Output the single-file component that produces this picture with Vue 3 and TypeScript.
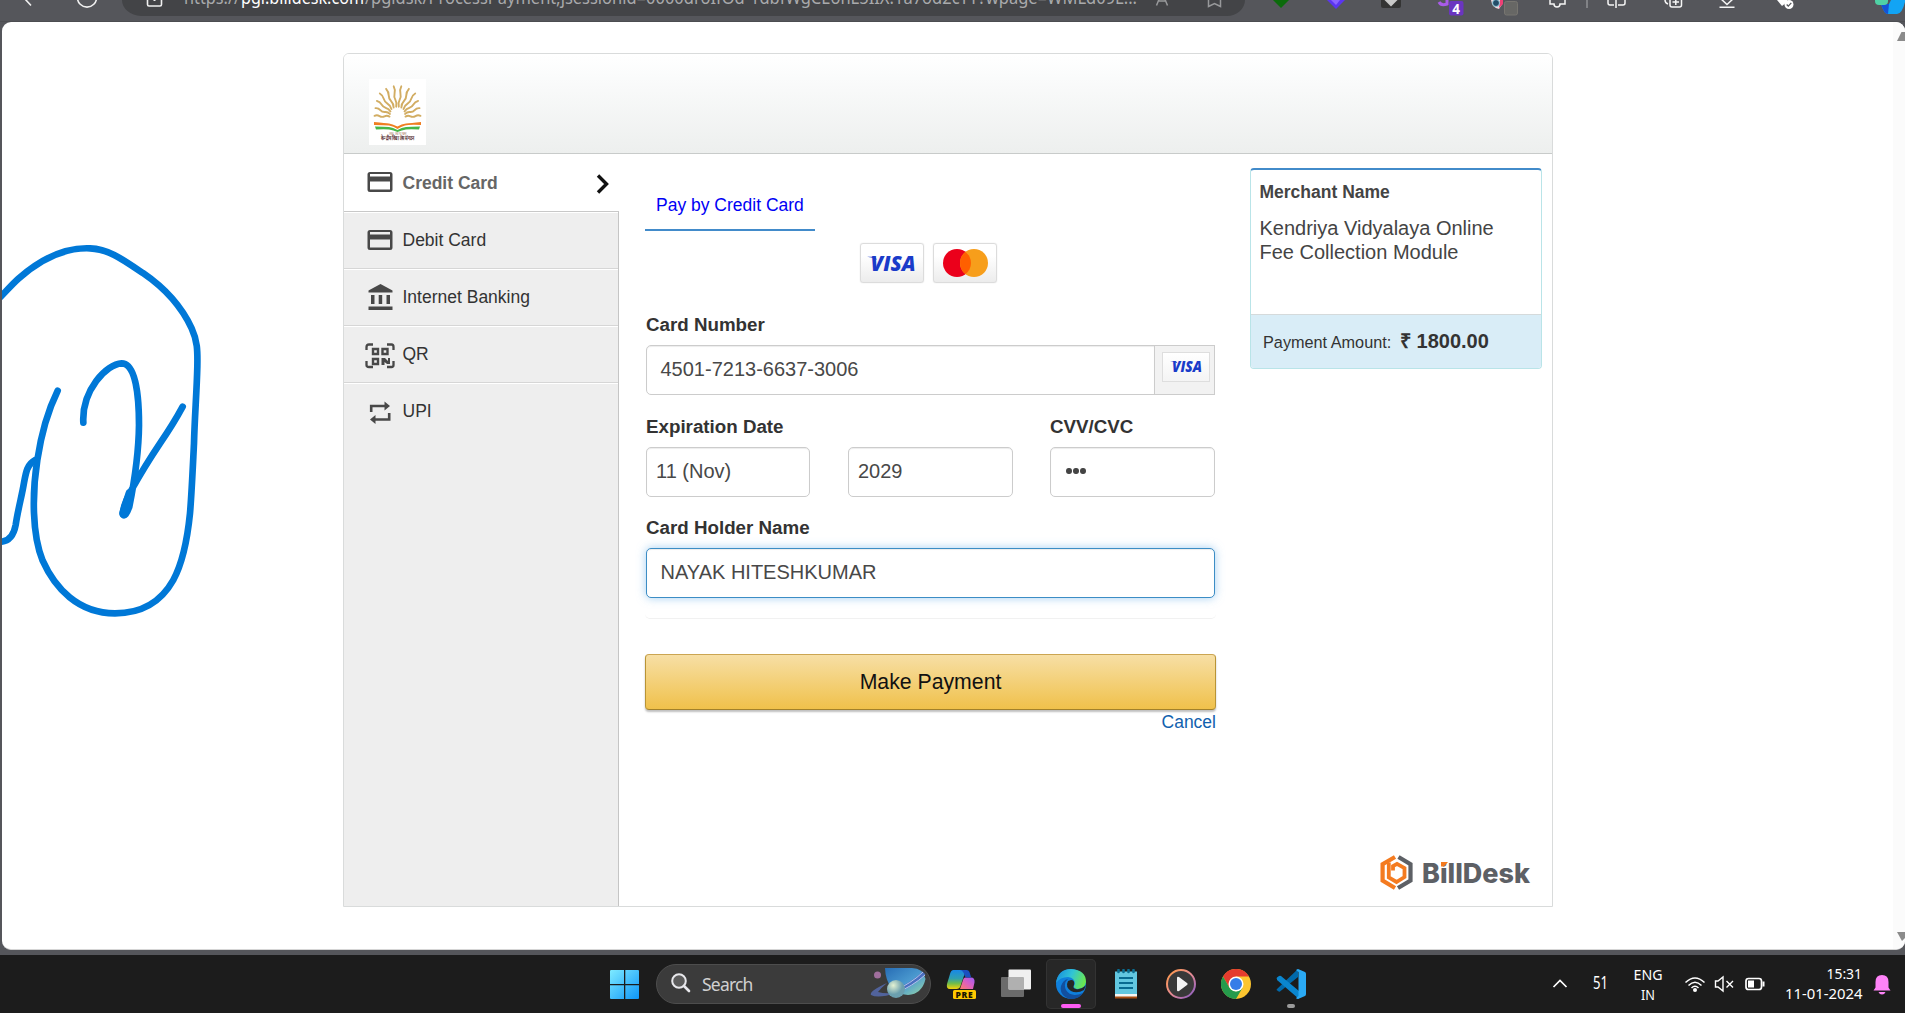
<script setup lang="ts">
import { ref } from 'vue'

interface Method {
  id: string
  label: string
}

interface Ray {
  angle: number
  stretch: number
}

const methods: Method[] = [
  { id: 'credit', label: 'Credit Card' },
  { id: 'debit', label: 'Debit Card' },
  { id: 'bank', label: 'Internet Banking' },
  { id: 'qr', label: 'QR' },
  { id: 'upi', label: 'UPI' },
]
const active = ref('credit')
const cardNumber = ref('4501-7213-6637-3006')
const holder = ref('NAYAK HITESHKUMAR')

// Emblem rays: degrees from vertical on one side, mirrored for the other
const rays: Ray[] = [
  { angle: 7, stretch: 1.33 },
  { angle: 22, stretch: 1.31 },
  { angle: 37, stretch: 1.27 },
  { angle: 52, stretch: 1.13 },
  { angle: 68, stretch: 1.03 },
  { angle: 87, stretch: 1 },
]
</script>

<template>
  <div class="screen">
    <header class="chrome">
      <svg width="1905" height="22" viewBox="0 0 1905 22" font-family="'Noto Sans','Open Sans',sans-serif">
        <path d="M122 -4V0A20 16 0 0 0 141 16H1227A18 16 0 0 0 1245 0V-4Z" fill="#434447" />
        <g fill="none" stroke="#f0f0f0" stroke-width="1.6">
          <path d="M25 -1L31 5.5" />
          <circle cx="87" cy="-2.5" r="9.6" />
          <path d="M147.500 -2V4.500Q147.500 6 149 6H160Q161.500 6 161.500 4.500V-2" />
          <path d="M153.500 0h2" stroke-width="2" />
        </g>
        <g font-size="17.5" fill="#a9aaac">
          <text x="184" y="4" textLength="56" lengthAdjust="spacingAndGlyphs">https://</text>
          <text x="241" y="4" textLength="123" lengthAdjust="spacingAndGlyphs" fill="#fff">pgi.billdesk.com</text>
          <text x="365" y="4" textLength="281" lengthAdjust="spacingAndGlyphs">/pgidsk/ProcessPayment;jsessionid=</text>
          <text x="646" y="4" textLength="491" lengthAdjust="spacingAndGlyphs">0000droIfOd-1dbfWgCEonL5IIX:1a7od2cTT?wpage=WMLd09L...</text>
        </g>
        <g fill="none" stroke="#98999b" stroke-width="1.5">
          <path d="M1156.500 5.500L1160 -3h4L1167.500 5.500M1158.500 1h7" />
          <path d="M1208.500 -2V6.500L1214.500 3.500L1220.500 6.500V-2" />
        </g>
        <path d="M1273 0h16l-8 8z" fill="#0b6b0b" />
        <path d="M1327 0h18l-9 9z" fill="#5b35f0" />
        <path d="M1331 0h9l-4 5z" fill="#8a63ff" />
        <path d="M1381 -2h20V6q0 2-2 2h-16q-2 0-2-2z" fill="#343434" />
        <path d="M1384.500 0h13l-6.500 6.500z" fill="#c9c9c9" />
        <path d="M1439 2q2 4 8 2V-2" fill="none" stroke="#a95be8" stroke-width="3" />
        <rect x="1449" y="1" width="14.500" height="14.500" rx="2" fill="#6a35c0" />
        <text x="1456.200" y="13.500" font-size="13.500" font-weight="700" fill="#fff" text-anchor="middle">4</text>
        <path d="M1491 0h12v3l-4 6q-7-1-8-9z" fill="#f0d8de" />
        <path d="M1500 0h3v4l-4 4z" fill="#ef3f75" />
        <circle cx="1496" cy="3" r="3.500" fill="#234d69" stroke="#9ad0df" />
        <rect x="1504.500" y="1.500" width="13" height="13.500" rx="2" fill="#676765" stroke="#777570" />
        <g fill="none" stroke="#f5f5f5" stroke-width="1.500">
          <path d="M1550 -1V4h4q0 3 3 3t3-3h5V-1" />
          <path d="M1608 -1V3q0 2 2 2h4M1618 5h5q2 0 2-2V-1M1616 -1V8" />
          <rect x="1670" y="-3" width="11.500" height="10" rx="2" />
          <path d="M1675.800 -1V5M1672.500 2h6.500M1665 0q0 3 3 4" />
          <path d="M1720 -2L1727 4.500L1734 -2M1719.500 7.300h15" />
        </g>
        <path d="M1587 0V8" stroke="#818286" stroke-width="2" />
        <path d="M1777 0h10v2l-5 4z" fill="#fff" />
        <circle cx="1789" cy="4.500" r="4.500" fill="#fff" />
        <path d="M1786.700 4.500l1.600 1.600 3-3.200" fill="none" stroke="#55565b" stroke-width="1.300" />
        <path d="M1881 4h8l3-6h13v4q-3 12-8 12h-9q-4 0-7-10z" fill="#12a4f4" />
        <path d="M1881 4h8l-1 10q-4 0-7-10z" fill="#1553d4" />
        <path d="M1875 0h13v1q0 4-4 4h-5q-4 0-4-4z" fill="#4fd1a5" />
      </svg>
    </header>

    <main class="page">
      <svg class="ink" width="220" height="400" viewBox="0 0 660 1200">
        <g fill="none" stroke="#0078d7" stroke-width="20" stroke-linecap="round" stroke-linejoin="round">
          <path d="M0 202C18 184 35 164 55 146C130 80 200 52 270 55C325 57 365 86 430 130C500 178 547 235 575 295C592 332 593 360 592 410C590 490 584 560 582 640C578 720 575 790 570 850C562 930 550 995 520 1050C482 1118 425 1150 345 1150C235 1150 165 1075 128 992C96 915 96 790 112 690C124 610 142 545 173 482" />
          <path d="M0 935C30 935 42 912 47 885C52 850 62 810 68 780C77 735 77 705 106 690" />
          <path d="M250 578C245 480 320 402 365 400C408 400 417 500 417 585C416 690 398 780 388 830Q376 863 369 854Q366 830 400 770C425 725 450 685 480 640Q520 582 548 530" />
          <path d="M390 790L371 850" stroke-width="27" />
        </g>
      </svg>
      <section class="panel">
        <div class="banner">
          <svg class="emblem" width="57" height="66" viewBox="0 0 57 66">
            <rect width="57" height="66" fill="#fff" />
            <g fill="none" stroke="#d2ad63" stroke-width="1.900" stroke-linecap="round">
              <template v-for="r in rays" :key="r.angle">
                <path d="M0 -8q-1.300-2.500 0-5t0-5t0-5" :transform="`translate(28.500 38) rotate(${r.angle}) scale(1 ${r.stretch})`" />
                <path d="M0 -8q1.300-2.500 0-5t0-5t0-5" :transform="`translate(28.500 38) rotate(${-r.angle}) scale(1 ${r.stretch})`" />
              </template>
            </g>
            <path d="M5 43q12 1 15 1.500t8.500 3q4-2.500 8.500-3t15-1.500v3q-12-.5-16 .5t-7.500 3.500q-4-3-8.500-3.500T5 46z" fill="#ef7f22" />
            <path d="M6 47.500q10 0 14 .5t8.500 3q4-2.500 8.500-3t14-.5l-1 3q-9-.5-13 0t-8.500 2.500q-4-2-8.500-2.500t-13 0z" fill="#46b648" />
            <text x="28.500" y="55.500" font-size="4" fill="#9a6a50" text-anchor="middle" textLength="17" lengthAdjust="spacingAndGlyphs">तत् त्वं पूषन्</text>
            <text x="28.500" y="61" font-size="6" font-weight="700" fill="#4d1f29" text-anchor="middle" textLength="33" lengthAdjust="spacingAndGlyphs">केन्द्रीय विद्यालय संगठन</text>
          </svg>
        </div>

        <div class="body">
          <nav class="side">
            <a v-for="m in methods" :key="m.id" class="method" :class="{ active: m.id === active }" @click="active = m.id">
              <svg width="30" height="28" viewBox="0 0 30 28" fill="#484848">
                <path
                  v-if="m.id === 'credit' || m.id === 'debit'"
                  fill-rule="evenodd"
                  d="M5 3H25Q27.500 3 27.500 5.500V20.500Q27.500 23 25 23H5Q2.500 23 2.500 20.500V5.500Q2.500 3 5 3ZM5 5V7.500H25V5ZM5 12.500V20.500H25V12.500Z"
                />
                <path v-else-if="m.id === 'bank'" d="M15.500 0L27.500 6.500V8.500H3.500V6.500ZM6 11h3.500v9H6zM13.700 11h3.500v9h-3.500zM21.500 11H25v9h-3.500zM3.500 22.500h24V26h-24z" />
                <g v-else-if="m.id === 'qr'">
                  <path d="M8 3.500H4Q1.500 3.500 1.500 6V9M22 3.500h4.500Q28.500 3.500 28.500 6V9M1.500 20v4Q1.500 26 4 26h4M28.500 20v4q0 2-2 2H22" fill="none" stroke="#484848" stroke-width="2.300" />
                  <path d="M8 8h5v5H8zM17.500 8h5v5h-5zM8 18h5v5H8z" fill="none" stroke="#484848" stroke-width="2.400" />
                  <path d="M16.500 17h3.500l3 3v-3h2v6h-3l-2.500-2v3h-3z" />
                </g>
                <g v-else fill="none" stroke="#484848" stroke-width="2.600">
                  <path d="M6.200 14V8H21M24.200 15v6.500H9" />
                  <path d="M19.500 3.500L25 8l-5.500 4.500zM10.500 17L5 21.500l5.500 4.500z" fill="#484848" stroke="none" />
                </g>
              </svg>
              <span>{{ m.label }}</span>
              <svg v-if="m.id === active" class="chev" width="14" height="20" viewBox="0 0 14 20">
                <path d="M2 1.500L10.500 10L2 18.500" fill="none" stroke="#111" stroke-width="3.400" />
              </svg>
            </a>
          </nav>

          <form class="form" @submit.prevent>
            <div class="tab">Pay by Credit Card</div>
            <div class="brands">
              <span class="brand">
                <svg width="64" height="40" viewBox="0 0 64 40">
                  <text x="10.500" y="28" textLength="45" lengthAdjust="spacingAndGlyphs" class="visa" font-size="20.500">VISA</text>
                  <path d="M7 13.800h8l2 3q-4-2.500-10-3z" fill="#1a3bc9" />
                </svg>
              </span>
              <span class="brand">
                <svg width="64" height="40" viewBox="0 0 64 40">
                  <circle cx="24" cy="20" r="14" fill="#eb001b" />
                  <circle cx="41" cy="20" r="14" fill="#f79e1b" />
                  <path d="M32.500 8.900a14 14 0 0 1 0 22.200a14 14 0 0 1 0-22.200z" fill="#ff5f00" />
                </svg>
              </span>
            </div>
            <label class="l1">Card Number</label>
            <div class="group">
              <div class="field num">{{ cardNumber }}</div>
              <div class="addon">
                <span class="mini">
                  <svg width="46" height="28" viewBox="0 0 46 28">
                    <text x="9" y="19" textLength="30" lengthAdjust="spacingAndGlyphs" class="visa" font-size="15">VISA</text>
                    <path d="M7 8.300h6l1.500 2q-3-1.700-7.500-2z" fill="#1a3bc9" />
                  </svg>
                </span>
              </div>
            </div>
            <div class="exp">
              <div class="col date">
                <label>Expiration Date</label>
                <div class="selects">
                  <div class="field sel">11 (Nov)</div>
                  <div class="field sel year">2029</div>
                </div>
              </div>
              <div class="col">
                <label class="l-cvv">CVV/CVC</label>
                <div class="field cvv"><i></i><i></i><i></i></div>
              </div>
            </div>
            <label class="l3">Card Holder Name</label>
            <div class="field focus">{{ holder }}</div>
            <div class="rule"></div>
            <button class="pay">Make Payment</button>
            <a class="cancel">Cancel</a>
          </form>

          <aside class="right">
            <div class="merchant">
              <div class="who">
                <b>Merchant Name</b>
                <p>Kendriya Vidyalaya Online<br />Fee Collection Module</p>
              </div>
              <div class="amount">
                <span>Payment Amount:</span>
                <strong>₹ 1800.00</strong>
              </div>
            </div>
            <svg class="billdesk" width="152" height="38" viewBox="0 0 152 38">
              <g fill="none" stroke-width="4.200">
                <path d="M15 3L2.600 10.300V26.500L15 34" stroke="#f47b20" />
                <path d="M18.500 3L30.500 10.300V26.500L18 34" stroke="#5d6065" />
                <path d="M8.800 8.500V23.500L16.500 28L24.500 23V14L17 9.800L13 12V16.500" stroke="#f47b20" stroke-width="3.800" />
              </g>
              <text x="42" y="28.500" class="bd" textLength="108" lengthAdjust="spacingAndGlyphs">BillDesk</text>
              <path d="M61 8h7l-4 4.500h-3z" fill="#f47b20" />
            </svg>
          </aside>
        </div>
      </section>
      <div class="scroll">
        <svg width="12" height="9"><path d="M4 9L8.500 0H12V9Z" fill="#8b8b8b" /></svg>
        <svg width="12" height="9"><path d="M4 0L9 9L12 6V0Z" fill="#8b8b8b" /></svg>
      </div>
    </main>

    <footer class="taskbar">
      <svg class="start" width="30" height="30" viewBox="0 0 30 30">
        <defs>
          <linearGradient id="win" x1="0" y1="0" x2="30" y2="30" gradientUnits="userSpaceOnUse"><stop stop-color="#7eeaff" /><stop offset="1" stop-color="#0a93f8" /></linearGradient>
        </defs>
        <path d="M0 1q0-1 1-1H14V14H0zM15.300 0H28q1 0 1 1V14H15.300zM0 15.300H14V29H1q-1 0-1-1zM15.300 15.300H29V28q0 1-1 1H15.300z" fill="url(#win)" />
      </svg>
      <div class="search">
        <svg width="20" height="20" viewBox="0 0 20 20"><circle cx="8" cy="8" r="6.800" fill="#5b5b5b" stroke="#e8e8ec" stroke-width="2" /><path d="M13 13l5 5" stroke="#e8e8ec" stroke-width="2.600" stroke-linecap="round" /></svg>
        <span>Search</span>
        <svg class="planet" width="56" height="32" viewBox="0 0 56 32">
          <defs>
            <linearGradient id="pl" x1="0" y1="0" x2="1" y2="1"><stop stop-color="#276db5" /><stop offset=".55" stop-color="#4c9bd0" /><stop offset="1" stop-color="#9ad9a6" /></linearGradient>
            <radialGradient id="moon" cx=".35" cy=".3"><stop stop-color="#e4f2d3" /><stop offset="1" stop-color="#6b9fae" /></radialGradient>
          </defs>
          <circle cx="7.500" cy="8" r="3.500" fill="#a06f9d" />
          <path d="M17 16Q-1 24 1 28Q8 32 26 26Q14 27 8 25Q11 21 17 16Z" fill="#51639c" />
          <path d="M15 1H42Q53 1 55.500 12Q52 27 38 28Q16 26 15 1Z" fill="url(#pl)" />
          <path d="M22 26Q42 18 54 6" fill="none" stroke="#4b6fc0" stroke-width="4" />
          <path d="M22 25Q42 16 53 5M24 27Q43 19 55 8" fill="none" stroke="#b4c4ec" stroke-width="1" />
          <circle cx="26" cy="22" r="9" fill="url(#moon)" />
        </svg>
      </div>
      <div class="apps">
        <div class="app">
          <svg width="30" height="30" viewBox="0 0 30 30">
            <defs>
              <linearGradient id="cpa" x1="0" y1="0" x2="0" y2="1"><stop stop-color="#1888e8" /><stop offset=".45" stop-color="#2f9fb0" /><stop offset=".7" stop-color="#6dbb4c" /><stop offset="1" stop-color="#f6d20a" /></linearGradient>
              <linearGradient id="cpb" x1="1" y1="0" x2="0" y2="1"><stop stop-color="#9a5cf6" /><stop offset=".5" stop-color="#dc5fc0" /><stop offset="1" stop-color="#ff7b68" /></linearGradient>
            </defs>
            <path d="M19 8.500h6q4 0 3.500 5L27 20H14l3-9q.5-2.500 2-2.500z" fill="url(#cpb)" />
            <path d="M7.500 1H20l-3.500 10-2 6q-1 3-4 3H4q-4 0-3-5L4 5q1-4 3.500-4z" fill="url(#cpa)" />
            <path d="M14 1h6.500q2.500 0 3.300 3l1.400 4.500H21q-2 0-2.500-2Q17.500 1.500 14 1z" fill="#1a4fc0" />
          </svg>
          <span class="pre">PRE</span>
        </div>
        <div class="app">
          <svg width="30" height="30" viewBox="0 0 30 30"><rect x="0" y="8" width="23" height="20" rx="1" fill="#6b6b6b" /><rect x="7.500" y="0.500" width="22.500" height="20" rx="1" fill="#f0f0f0" /><path d="M7.500 8H22q1 0 1 1V20.500H7.500z" fill="#b0b0b0" /></svg>
        </div>
        <div class="app on">
          <svg width="30" height="30" viewBox="0 0 30 30">
            <defs>
              <linearGradient id="eg" x1="0" y1=".2" x2="1" y2=".5"><stop stop-color="#168de0" /><stop offset=".5" stop-color="#31c4d5" /><stop offset="1" stop-color="#6be84e" /></linearGradient>
            </defs>
            <circle cx="15" cy="15" r="15" fill="#0f7fdc" />
            <path d="M0 14Q2 0 15 0Q30 1 30 13Q29 20 21 20Q16 19 19 15Q19 9 12 8Q4 8 0 14Z" fill="url(#eg)" />
            <path d="M12 10Q7 14 10 21Q15 29 27 24Q22 31 13 30Q3 26 5 17Q7 11 12 10Z" fill="#124f9e" />
            <path d="M12 12Q9 18 15 22Q21 25 28 21L30 16L29 17Q25 21 20 20Q16 19 18 16Q19 11 15 11Z" fill="#262626" />
          </svg>
          <b class="pink"></b>
        </div>
        <div class="app">
          <svg width="30" height="30" viewBox="0 0 30 30"><path d="M4 2.500H26V26H4z" fill="#62c7e0" /><path d="M4 25H26V28H4z" fill="#f5f5f3" /><path d="M4 27.500H26V29.500H4z" fill="#a64c10" /><path d="M8 9h14M8 14h14M8 19h14" stroke="#086b91" stroke-width="1.800" /><path d="M7.500 1v2M12.500 1v2M17.500 1v2M22.500 1v2" stroke="#0a6e92" stroke-width="2.600" stroke-linecap="round" /></svg>
        </div>
        <div class="app">
          <svg width="30" height="30" viewBox="0 0 30 30">
            <defs><linearGradient id="mp" x1="0" y1="0" x2="1" y2="1"><stop stop-color="#ff9a44" /><stop offset=".5" stop-color="#e88c92" /><stop offset="1" stop-color="#8058c8" /></linearGradient></defs>
            <circle cx="15" cy="15" r="14" fill="#393939" stroke="url(#mp)" stroke-width="2" /><path d="M11 9q0-2 2-1l8 6q1.500 1 0 2l-8 6q-2 1-2-1z" fill="#f4f4f4" />
          </svg>
        </div>
        <div class="app">
          <svg width="30" height="30" viewBox="0 0 30 30"><circle cx="15" cy="15" r="15" fill="#fcc52f" /><path d="M2 7.500A15 15 0 0 1 28 7.500H15V15L8.500 18.800Z" fill="#e43b2e" /><path d="M2 7.500L8.500 18.800Q11 22 15 22.500L21.500 18.800L15 30A15 15 0 0 1 2 7.500Z" fill="#259b4c" /><circle cx="15" cy="15" r="7.500" fill="#fff" /><circle cx="15" cy="15" r="6" fill="#357de8" /></svg>
        </div>
        <div class="app">
          <svg width="30" height="30" viewBox="0 0 30 30"><path d="M1 20L22 0V8L4 22.500q-1 .5-2-.5L.5 21z" fill="#0069ab" /><path d="M1 10q-1-1 0-1.500L3 7q1-.5 2 0L23 22V30L1 11z" fill="#0a86cf" /><path d="M22 0L29 3q1 .5 1 2V25q0 1.500-1 2L22 30q-1.500 0-2-1L22.500 27V3L20 1z" fill="#2aaaf5" /></svg>
          <b class="dot"></b>
        </div>
      </div>
      <svg class="tray" width="365" height="58" viewBox="0 0 365 58" font-family="'Noto Sans','Open Sans',sans-serif" fill="#fff">
        <g fill="none" stroke="#fff" stroke-width="1.700">
          <path d="M13.500 32L20 25.500L26.500 32" />
          <path d="M145.500 27.500Q155 18.500 164.500 27.500M148.500 30.500Q155 24 161.500 30.500M151.500 33Q155 29.500 158.500 33" stroke-width="1.500" />
          <path d="M175.500 26H178L183 22V36L178 32H175.500Z M186.500 26L193 32.500M193 26L186.500 32.500" stroke-width="1.400" />
          <rect x="206" y="23.500" width="15.500" height="11" rx="2.500" />
          <path d="M223.500 26.500v5" stroke-width="2" />
        </g>
        <circle cx="155" cy="35" r="2" />
        <rect x="208" y="25.500" width="6" height="7" />
        <text x="53" y="33.500" font-size="18.500" textLength="15" lengthAdjust="spacingAndGlyphs">51</text>
        <g font-size="15">
          <text x="93.500" y="24.500" textLength="29" lengthAdjust="spacingAndGlyphs">ENG</text>
          <text x="101" y="44.500" textLength="14" lengthAdjust="spacingAndGlyphs">IN</text>
          <text x="286.500" y="23.800" textLength="35.500" lengthAdjust="spacingAndGlyphs">15:31</text>
          <text x="245" y="43.800" textLength="77.500" lengthAdjust="spacingAndGlyphs">11-01-2024</text>
        </g>
        <path d="M333.500 35.500l2-3V27q0-7 6.500-7t6.500 7v5.500l2 3zM338.500 37h7q-1 2.500-3.500 2.500t-3.500-2.500z" fill="#ff83f8" />
      </svg>
    </footer>
  </div>
</template>

<style>
html, body { margin: 0; overflow: hidden; }
</style>

<style scoped>
.screen { width: 1905px; height: 1013px; background: #55565b; display: flex; flex-direction: column; overflow: hidden; font-family: "Liberation Sans", Arial, sans-serif; font-size: 17.5px; color: #333; box-sizing: border-box; }
.screen * { box-sizing: border-box; }
svg { display: block; flex: none; }
.chrome { height: 22px; flex: none; box-shadow: inset 0 -1px #4c4d51; }
.page { position: relative; height: 928px; flex: none; margin-left: 2px; background: #fff; border-radius: 9px; border-bottom: 1px solid #d5d5d5; overflow: hidden; display: flex; justify-content: space-between; }
.ink { position: absolute; left: -2px; top: 208px; }
.panel { width: 1210px; height: 854px; margin: 31px 0 0 341px; border: 1px solid #d9dbdb; border-radius: 6px 6px 0 0; }
.banner { height: 100px; padding: 25px 0 0 25px; border-bottom: 1px solid #c8cbca; background: linear-gradient(#fff, #fafbfb 25%, #edefee); border-radius: 5px 5px 0 0; }
.body { display: flex; height: 752px; }
.side { width: 275px; background: #eee; border-right: 1px solid #c5c5c5; }
.method { display: flex; align-items: center; height: 57px; padding-left: 21px; border-top: 1px solid #fff; border-bottom: 1px solid #d6d6d6; color: #333; }
.method span { margin-left: 7.5px; flex: 1; }
.method.active { height: 58px; width: 275px; background: #fff; font-weight: bold; color: #666; border-bottom-color: #c8c8c8; }
.method:last-child { border-bottom: 0; height: 56px; }
.chev { margin: 1px 9px 0 0; }
.form { width: 571px; margin: 0 0 0 26px; }
.tab { width: 170px; height: 77px; padding: 39px 0 0 11px; line-height: 24px; color: #0000f5; border-bottom: 2px solid #428bca; white-space: nowrap; }
.brands { display: flex; gap: 9px; justify-content: center; margin: 12px 0 30px -5px; }
.brand { width: 64px; height: 40px; border: 1px solid #dcdcdc; border-radius: 3px; background: linear-gradient(#fff 30%, #ececec); box-shadow: 0 0 1px #ccc; }
.brand svg { margin: -1px; }
.visa { font-family: "Open Sans", sans-serif; font-weight: 800; font-style: italic; fill: #1a3bc9; }
label { display: block; font-weight: bold; font-size: 18.75px; line-height: 24px; padding-left: 1px; white-space: nowrap; }
.field { height: 50px; border: 1px solid #ccc; border-radius: 5px; background: #fff; box-shadow: inset 0 1px 1px rgba(0, 0, 0, .075); padding-left: 13.5px; line-height: 46px; font-size: 20px; color: #484848; white-space: nowrap; }
.group { display: flex; margin: 8px 1px 0; }
.num { width: 509px; border-radius: 5px 0 0 5px; }
.addon { width: 61px; margin-left: -1px; height: 50px; border: 1px solid #ccc; background: #f2f2f2; padding: 6px 0 0 7px; }
.mini { display: block; width: 48px; height: 30px; border: 1px solid #dedede; background: linear-gradient(#fff, #f4f4f4); }
.exp { display: flex; gap: 37px; margin: 20px 1px 0 0; }
.date { width: 368px; }
.selects { display: flex; gap: 38px; margin: 8px 0 0 1px; }
.sel { width: 164px; padding-left: 9px; }
.year { width: 165px; }
.l-cvv { padding-left: 0; }
.cvv { width: 165px; margin-top: 8px; display: flex; gap: 1.5px; padding: 20px 0 0 15px; }
.cvv i { width: 5.5px; height: 6px; border-radius: 50%; background: #444; }
.l3 { margin: 19px 0 8px; }
.focus { margin: 0 1px; border-color: #3c8dc5; box-shadow: inset 0 1px 1px rgba(0, 0, 0, .075), 0 0 10px rgba(102, 175, 233, .6); line-height: 47px; }
.rule { height: 21px; border-bottom: 1px solid #f1f1f1; border-radius: 0 0 5px 5px; }
.pay { display: block; width: 571px; height: 56px; margin-top: 35px; padding: 0; font: 21.25px "Liberation Sans", Arial, sans-serif; color: #111; border: 1px solid #b99435; border-color: #cba552 #b99435 #a2812b; border-radius: 4px; background: linear-gradient(#f7dfa5, #f0c14b); box-shadow: 0 2px 2px rgba(0, 0, 0, .25); }
.cancel { display: block; text-align: right; line-height: 24px; color: #1161ae; }
.right { width: 292px; margin-left: 34px; padding-top: 14px; display: flex; flex-direction: column; }
.merchant { height: 201px; border: 1px solid #b9e4e8; border-top: 2px solid #428bca; border-radius: 4px; overflow: hidden; }
.who { height: 145px; padding: 10px 0 0 8.5px; border-bottom: 1px solid #d5dadb; color: #444; line-height: 24px; }
.who p { margin: 12px 0 0; font-size: 20px; line-height: 24px; }
.amount { height: 54px; background: #d9edf7; padding-left: 12px; display: flex; align-items: baseline; line-height: 52px; white-space: nowrap; }
.amount span { font-size: 16.25px; width: 137px; }
.amount strong { font-size: 20px; }
.billdesk { margin: 485px 0 0 130px; }
.bd { font-family: Inter, sans-serif; font-weight: 800; font-size: 27px; fill: #5d6065; }
.scroll { width: 12px; height: 928px; background: #fbfbfb; display: flex; flex-direction: column; justify-content: space-between; padding: 10px 0 9px; }
.taskbar { height: 58px; margin-top: 5px; flex: none; background: #1c1c1c; display: flex; }
.start { margin: 15px 0 0 610px; }
.search { width: 275px; height: 40px; margin: 9px 1px 0 16px; border-radius: 20px; border: 1px solid #4d4d4d; background: #3b3b3b; display: flex; align-items: center; padding: 0 4px 0 14px; font: 17.5px "Noto Sans", "Open Sans", sans-serif; color: #d0d0d0; }
.search span { flex: 1; margin-left: 11px; letter-spacing: -.8px; }
.search svg:first-child { margin-top: -2px; }
.planet { margin-top: -3px; }
.apps { display: flex; gap: 5px; margin: 4px 0 0 4px; }
.app { position: relative; width: 50px; height: 50px; padding: 10px; border-radius: 5px; }
.on { background: #272727; box-shadow: inset 0 0 0 1px #333; }
.app b { position: absolute; bottom: 1px; height: 4px; border-radius: 2px; }
.pre { position: absolute; left: 17px; top: 31px; width: 23px; height: 9px; border-radius: 1.5px; background: #ffc800; color: #1b1600; font: 800 8.5px/9px "Open Sans", sans-serif; letter-spacing: .7px; text-align: center; }
.pink { left: 15px; width: 20px; background: #ff5cf4; }
.dot { left: 21px; width: 8px; background: #9b9b9b; }
.tray { margin-left: 224px; }
</style>
